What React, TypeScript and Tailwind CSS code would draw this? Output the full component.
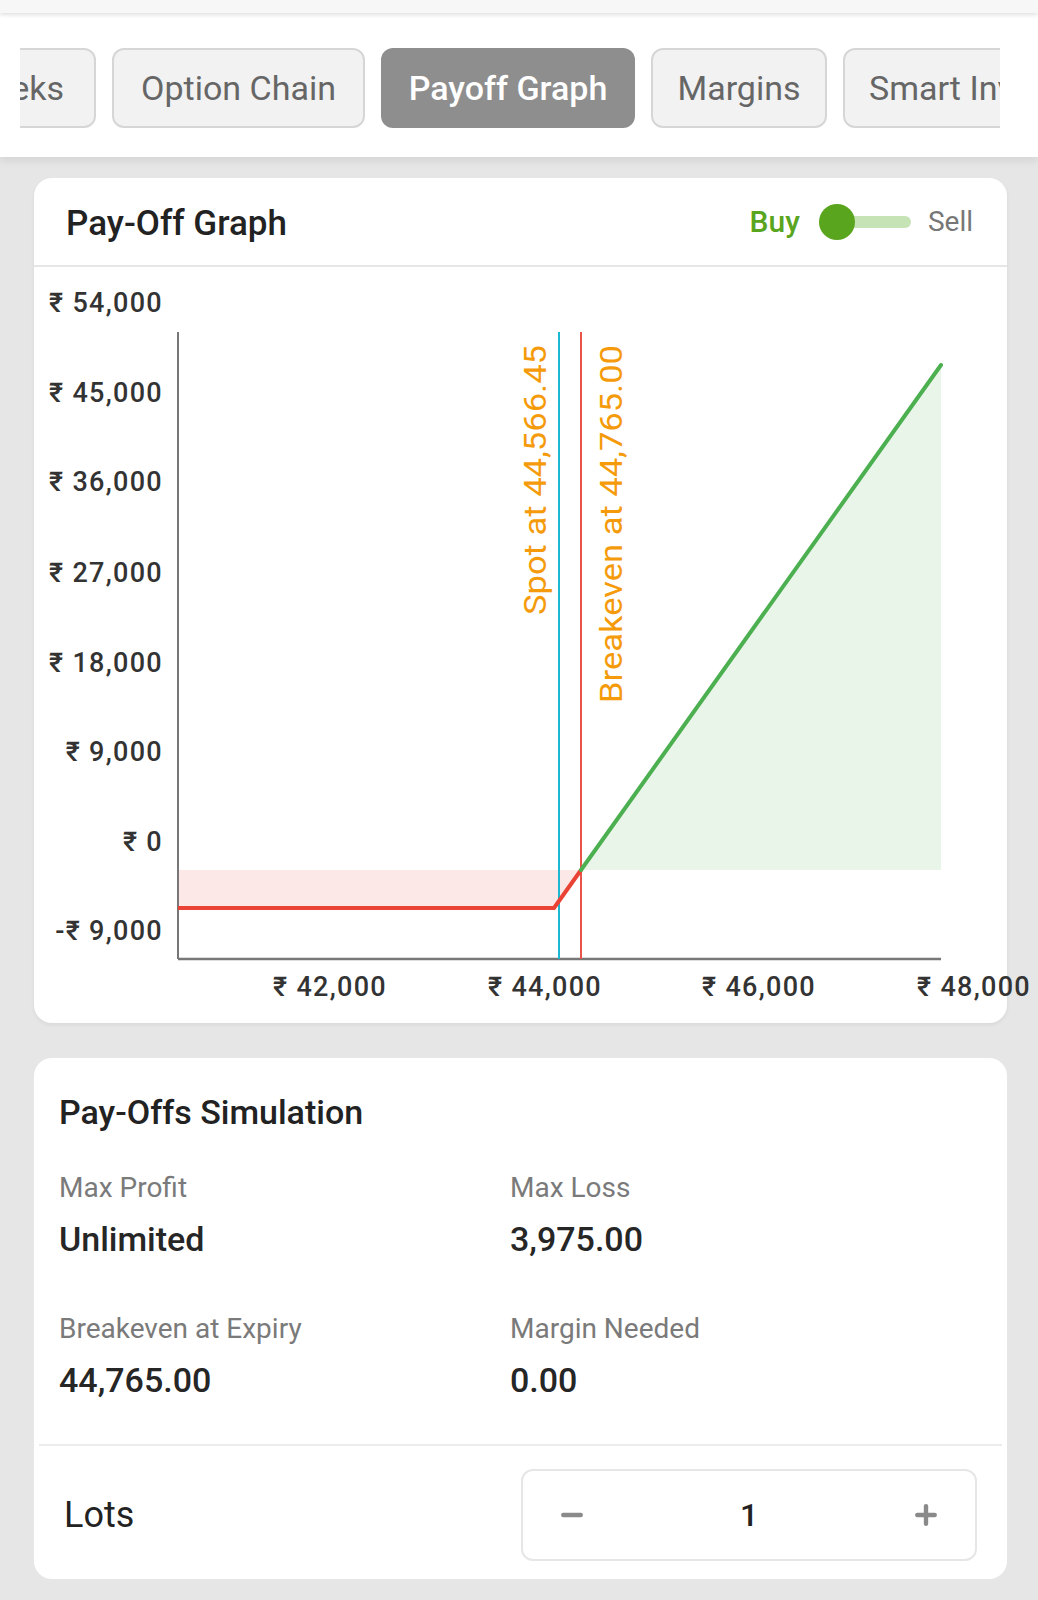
import { Minus, Plus } from "lucide-react";

const font = { fontFamily: "Roboto, 'Noto Sans', sans-serif" };

const tabs = [
  { label: "Greeks", w: "w-[160px] justify-end pr-[30px]" },
  { label: "Option Chain", w: "w-[253px] justify-center" },
  { label: "Payoff Graph", w: "w-[254px] justify-center" },
  { label: "Margins", w: "w-[176px] justify-center" },
  { label: "Smart Investing", w: "w-[280px] justify-start pl-[24px]" },
];

const yTicks = [
  { label: "₹ 54,000", y: 38 },
  { label: "₹ 45,000", y: 128 },
  { label: "₹ 36,000", y: 217 },
  { label: "₹ 27,000", y: 308 },
  { label: "₹ 18,000", y: 398 },
  { label: "₹ 9,000", y: 487 },
  { label: "₹ 0", y: 577 },
  { label: "-₹ 9,000", y: 666 },
];

const xTicks = [
  { label: "₹ 42,000", x: 296 },
  { label: "₹ 44,000", x: 511 },
  { label: "₹ 46,000", x: 725 },
  { label: "₹ 48,000", x: 940 },
];

const PayoffChart = () => (
  <svg width="973" height="756" viewBox="0 0 973 756" className="block overflow-visible">
    <g fill="#333" fontSize="27" fontWeight="500" letterSpacing="1.3" style={font}>
      {yTicks.map((t) => (
        <text key={t.label} x="129" y={t.y} textAnchor="end" dominantBaseline="middle">
          {t.label}
        </text>
      ))}
      {xTicks.map((t) => (
        <text key={t.label} x={t.x} y={722} textAnchor="middle" dominantBaseline="middle">
          {t.label}
        </text>
      ))}
    </g>
    {/* filled areas */}
    <polygon points="144,603 547,603 520,641 144,641" fill="#fce8e6" />
    <polygon points="547,603 907,98 907,603" fill="#eaf5ea" />
    {/* axes */}
    <line x1="144" y1="65" x2="144" y2="692" stroke="#777" strokeWidth="2" />
    <line x1="144" y1="692" x2="907" y2="692" stroke="#777" strokeWidth="2.5" />
    {/* spot & breakeven */}
    <line x1="525" y1="65" x2="525" y2="692" stroke="#1cb8d2" strokeWidth="2" />
    <line x1="547" y1="65" x2="547" y2="692" stroke="#e8534a" strokeWidth="2" />
    <g fill="#f59b0b" fontSize="32" style={font}>
      <text transform="translate(512 78) rotate(-90)" textAnchor="end" textLength="270" lengthAdjust="spacingAndGlyphs">
        Spot at 44,566.45
      </text>
      <text transform="translate(588 78) rotate(-90)" textAnchor="end" textLength="358" lengthAdjust="spacingAndGlyphs">
        Breakeven at 44,765.00
      </text>
    </g>
    {/* payoff line */}
    <polyline points="144,641 520,641 547,603" fill="none" stroke="#ea4335" strokeWidth="4" strokeLinejoin="round" />
    <line x1="547" y1="603" x2="907" y2="98" stroke="#4caf50" strokeWidth="4" strokeLinecap="round" />
  </svg>
);

const Stat = ({ label, value }: { label: string; value: string }) => (
  <div className="flex flex-col">
    <span className="text-[28px] leading-[36px] text-[#7a7a7a]">{label}</span>
    <span className="mt-[13px] text-[34px] leading-[40px] font-medium text-[#262626]">{value}</span>
  </div>
);

export default function App() {
  return (
    <div className="min-h-[1600px] bg-[#e6e6e6] text-[#222]" style={font}>
      <div className="h-[13px] bg-[#f7f7f7] shadow-[0_2px_4px_rgba(0,0,0,0.12)] relative z-10" />
      <div className="bg-white pt-[35px] pb-[29px] shadow-[0_4px_8px_rgba(0,0,0,0.08)] relative">
        <div className="ml-[20px] w-[980px] overflow-hidden">
          <div className="flex gap-4 ml-[-84px]">
            {tabs.map((t) => {
              const active = t.label === "Payoff Graph";
              return (
                <div
                  key={t.label}
                  className={
                    active
                      ? `h-[80px] shrink-0 flex items-center rounded-[12px] bg-[#8e8e8e] text-[34px] font-medium text-white ${t.w}`
                      : `h-[80px] shrink-0 flex items-center rounded-[12px] border-2 border-[#d6d6d6] bg-[#f2f2f2] text-[34px] text-[#666] ${t.w}`
                  }
                >
                  {t.label}
                </div>
              );
            })}
          </div>
        </div>
      </div>

      <div className="ml-[34px] mt-[21px] w-[973px] rounded-[18px] bg-white shadow-[0_2px_4px_rgba(0,0,0,0.06)]">
        <div className="flex h-[89px] items-center justify-between border-b-2 border-[#e6e6e6] pl-[32px] pr-[34px]">
          <h2 className="mt-[6px] text-[35px] font-medium text-[#222]">Pay-Off Graph</h2>
          <div className="flex items-center">
            <span className="text-[30px] font-medium text-[#5aa51e]">Buy</span>
            <div className="relative ml-[19px] h-[12px] w-[92px] rounded-full bg-[#c6e3b6]">
              <div className="absolute left-0 top-[-12px] h-[36px] w-[36px] rounded-full bg-[#5aa51e]" />
            </div>
            <span className="ml-[17px] text-[28px] text-[#777]">Sell</span>
          </div>
        </div>
        <PayoffChart />
      </div>

      <div className="ml-[34px] mt-[35px] w-[973px] rounded-[18px] bg-white px-[25px] pt-[34px] pb-[18px]">
        <h2 className="text-[34px] leading-[40px] font-medium text-[#222]">Pay-Offs Simulation</h2>
        <div className="mt-[38px] grid grid-cols-[451px_1fr] gap-y-[52px]">
          <Stat label="Max Profit" value="Unlimited" />
          <Stat label="Max Loss" value="3,975.00" />
          <Stat label="Breakeven at Expiry" value="44,765.00" />
          <Stat label="Margin Needed" value="0.00" />
        </div>
        <div className="mt-[44px] -mx-[20px] h-[2px] bg-[#ececec]" />
        <div className="mt-[23px] flex items-center justify-between">
          <span className="ml-[5px] text-[36px] text-[#222]">Lots</span>
          <div className="mr-[5px] flex h-[92px] w-[456px] items-center justify-between rounded-[12px] border-2 border-[#e6e6e6] px-[34px]">
            <Minus size={30} strokeWidth={3.5} className="text-[#8a8a8a]" />
            <span className="text-[32px] font-medium text-[#222]">1</span>
            <Plus size={30} strokeWidth={3.5} className="text-[#8a8a8a]" />
          </div>
        </div>
      </div>
    </div>
  );
}
